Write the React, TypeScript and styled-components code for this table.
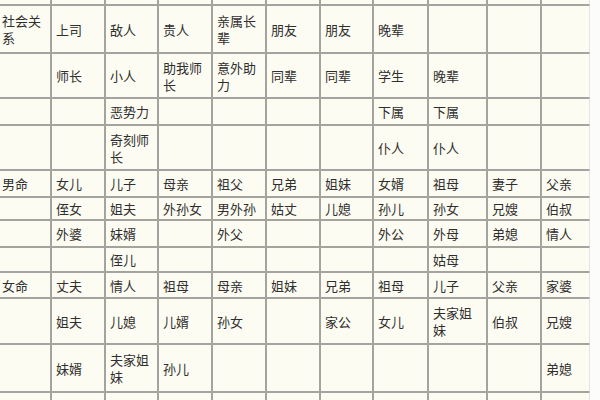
import React from "react";
import styled, { createGlobalStyle } from "styled-components";

const Global = createGlobalStyle`
  * { box-sizing: border-box; }
  html, body { margin: 0; padding: 0; background: #fdfdfb; overflow: hidden; }
  body { width: 600px; height: 400px; }
`;

const Page = styled.div`
  width: 600px;
  height: 400px;
  overflow: hidden;
  background: #fcfcfa;
`;

const Table = styled.table`
  margin: -15px 0 0 -3px;
  width: 593px;
  table-layout: fixed;
  border-collapse: separate;
  border-spacing: 0;
  background: #fdfcf2;
  font-family: "Noto Sans CJK SC", "Noto Sans CJK TC", sans-serif;
  font-size: 13px;
  line-height: 17px;
  color: #2f2f2f;
`;

const Row = styled.tr<{ $h: number }>`
  height: ${(p) => p.$h}px;
`;

const Cell = styled.td<{ $last?: boolean }>`
  border: 1px solid #a3a3a0;
  border-right-color: ${(p) => (p.$last ? "#e6e6e0" : "#a3a3a0")};
  padding: 0 3px 0 4px;
  vertical-align: middle;
  overflow: hidden;
  word-break: break-all;
`;

const widths = [54, 54, 53, 54, 54, 54, 53, 55, 59, 54, 49];

const rows: { h: number; c: string[] }[] = [
  { h: 20, c: ["", "", "", "", "", "", "", "", "", "", ""] },
  { h: 48, c: ["社会关系", "上司", "敌人", "贵人", "亲属长辈", "朋友", "朋友", "晚辈", "", "", ""] },
  { h: 45, c: ["", "师长", "小人", "助我师长", "意外助力", "同辈", "同辈", "学生", "晚辈", "", ""] },
  { h: 27, c: ["", "", "恶势力", "", "", "", "", "下属", "下属", "", ""] },
  { h: 45, c: ["", "", "奇刻师长", "", "", "", "", "仆人", "仆人", "", ""] },
  { h: 27, c: ["男命", "女儿", "儿子", "母亲", "祖父", "兄弟", "姐妹", "女婿", "祖母", "妻子", "父亲"] },
  { h: 23, c: ["", "侄女", "姐夫", "外孙女", "男外孙", "姑丈", "儿媳", "孙儿", "孙女", "兄嫂", "伯叔"] },
  { h: 27, c: ["", "外婆", "妹婿", "", "外父", "", "", "外公", "外母", "弟媳", "情人"] },
  { h: 25, c: ["", "", "侄儿", "", "", "", "", "", "姑母", "", ""] },
  { h: 26, c: ["女命", "丈夫", "情人", "祖母", "母亲", "姐妹", "兄弟", "祖母", "儿子", "父亲", "家婆"] },
  { h: 46, c: ["", "姐夫", "儿媳", "儿婿", "孙女", "", "家公", "女儿", "夫家姐妹", "伯叔", "兄嫂"] },
  { h: 48, c: ["", "妹婿", "夫家姐妹", "孙儿", "", "", "", "", "", "", "弟媳"] },
  { h: 40, c: ["", "", "妯娌", "", "", "", "", "", "", "", "妯娌"] },
];

export default function App() {
  return (
    <Page>
      <Global />
      <Table>
        <colgroup>
          {widths.map((w, i) => (
            <col key={i} style={{ width: w }} />
          ))}
        </colgroup>
        <tbody>
          {rows.map((r, ri) => (
            <Row key={ri} $h={r.h}>
              {r.c.map((t, ci) => (
                <Cell key={ci} $last={ci === 10}>
                  {t}
                </Cell>
              ))}
            </Row>
          ))}
        </tbody>
      </Table>
    </Page>
  );
}
